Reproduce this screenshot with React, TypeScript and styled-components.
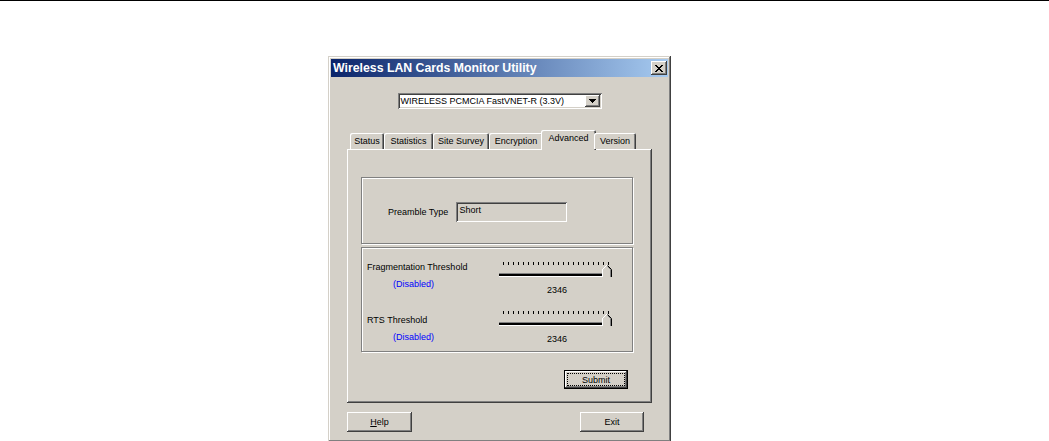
import React from "react";
import styled, { createGlobalStyle } from "styled-components";

const GlobalStyle = createGlobalStyle`
  html, body {
    margin: 0;
    padding: 0;
    background: #fff;
  }
  body {
    font-family: "Liberation Sans", Arial, sans-serif;
    font-size: 9px;
    color: #000;
  }
`;

const face = "#d4d0c8";
const raised = `inset -1px -1px #404040, inset 1px 1px #fff, inset -2px -2px #808080, inset 2px 2px ${face}`;
const sunken = `inset 1px 1px #808080, inset -1px -1px #fff, inset 2px 2px #404040, inset -2px -2px ${face}`;

const Page = styled.div`
    width: 1049px;
    height: 441px;
    overflow: hidden;
    border-top: 1px solid #000;
    box-sizing: border-box;
`;

const Window = styled.div`
    margin: 55px 0 0 328px;
    width: 343px;
    height: 386px;
    box-sizing: border-box;
    padding: 3px;
    background: ${face};
    box-shadow: inset -1px -1px #404040, inset 1px 1px ${face}, inset -2px -2px #808080, inset 2px 2px #fff;
    display: flex;
    flex-direction: column;
`;

const TitleBar = styled.div`
    height: 18px;
    display: flex;
    align-items: center;
    justify-content: space-between;
    padding: 0 1px 0 2px;
    background: linear-gradient(to right, #0a246a, #a6caf0);
`;

const Title = styled.span`
    color: #fff;
    font-weight: bold;
    font-size: 12.3px;
    line-height: 18px;
    white-space: nowrap;
`;

const CloseButton = styled.div`
    width: 16px;
    height: 14px;
    background: ${face};
    box-shadow: ${raised};
    display: flex;
    align-items: center;
    justify-content: center;
`;

const Client = styled.div`
    display: flex;
    flex-direction: column;
    padding-top: 16px;
`;

const ComboRow = styled.div`
    display: flex;
    justify-content: center;
`;

const Combo = styled.div`
    width: 204px;
    height: 16px;
    box-sizing: border-box;
    background: #fff;
    box-shadow: ${sunken};
    display: flex;
    align-items: center;
    justify-content: space-between;
    padding: 0 2px 0 3px;
    white-space: nowrap;
`;

const DropButton = styled.div`
    width: 15px;
    height: 12px;
    background: ${face};
    box-shadow: ${raised};
    display: flex;
    align-items: center;
    justify-content: center;
`;

const TabStrip = styled.div`
    margin: 22px 0 0 16px;
    padding-left: 3px;
    height: 18px;
    display: flex;
    align-items: flex-end;
    position: relative;
    z-index: 1;
`;

const Tab = styled.div<{ $w: number; $active?: boolean }>`
    width: ${(p) => p.$w + (p.$active ? 4 : 0)}px;
    height: ${(p) => (p.$active ? 20 : 16)}px;
    margin: 0 ${(p) => (p.$active ? -2 : 0)}px ${(p) => (p.$active ? -1 : 0)}px;
    box-sizing: border-box;
    background: ${face};
    border-radius: 2px 2px 0 0;
    box-shadow: inset 1px 1px #fff, inset -1px 0 #404040, inset -2px 0 #808080;
    display: flex;
    justify-content: center;
    padding-top: ${(p) => (p.$active ? 3 : 3)}px;
    line-height: 11px;
    white-space: nowrap;
`;

const Panel = styled.div`
    margin-left: 16px;
    width: 305px;
    height: 254px;
    box-sizing: border-box;
    box-shadow: ${raised};
    padding: 28px 0 0 14px;
    display: flex;
    flex-direction: column;
`;

const Group = styled.div<{ $h: number }>`
    width: 272px;
    height: ${(p) => p.$h}px;
    box-sizing: border-box;
    border: 1px solid #808080;
    box-shadow: inset 1px 1px #fff, 1px 1px #fff;
`;

const PreambleGroup = styled(Group)`
    display: flex;
    align-items: center;
    padding: 3px 0 0 26px;
`;

const Label = styled.span`
    margin-right: 8px;
    line-height: 12px;
    white-space: nowrap;
`;

const Field = styled.div`
    width: 111px;
    height: 20px;
    box-sizing: border-box;
    box-shadow: ${sunken};
    padding: 3px 0 0 3px;
    line-height: 11px;
`;

const ThresholdGroup = styled(Group)`
    margin-top: 3px;
    padding: 13px 0 0 5px;
    display: flex;
    flex-direction: column;
    gap: 14px;
`;

const Row = styled.div`
    display: grid;
    grid-template-columns: 132px 116px;
`;

const RowText = styled.div<{ $drop: number }>`
    display: flex;
    flex-direction: column;
    padding-top: ${(p) => p.$drop}px;
    line-height: 12px;
`;

const Disabled = styled.span`
    color: #0000ff;
    margin: 5px 0 0 26px;
`;

const SliderBox = styled.div`
    display: flex;
    flex-direction: column;
    align-items: center;
    line-height: 12px;
    & svg {
        display: block;
    }
`;

const Value = styled.span`
    margin-top: 6px;
`;

const SubmitRow = styled.div`
    width: 273px;
    margin-top: 18px;
    padding-right: 6px;
    box-sizing: border-box;
    display: flex;
    justify-content: flex-end;
`;

const Button = styled.div<{ $w: number; $h: number }>`
    width: ${(p) => p.$w}px;
    height: ${(p) => p.$h}px;
    box-sizing: border-box;
    background: ${face};
    box-shadow: ${raised};
    display: flex;
    align-items: center;
    justify-content: center;
    line-height: 12px;
`;

const DefaultButton = styled(Button)`
    border: 1px solid #000;
    box-shadow: inset -1px -1px #404040, inset 1px 1px #fff, inset -2px -2px #808080;
    padding: 2px;
`;

const Focus = styled.div`
    flex: 1;
    align-self: stretch;
    border: 1px dotted #000;
    display: flex;
    align-items: center;
    justify-content: center;
`;

const ButtonRow = styled.div`
    margin-top: 9px;
    padding: 0 24px 0 16px;
    display: flex;
    justify-content: space-between;
`;

const Slider: React.FC = () => (
    <svg width="116" height="17" viewBox="0 0 116 17" shapeRendering="crispEdges">
        {Array.from({ length: 22 }, (_, i) => (
            <rect key={i} x={4 + i * 5} y={1} width={1} height={i === 21 ? 6 : 3} fill="#000" />
        ))}
        <rect x="0" y="12" width="104" height="1" fill="#808080" />
        <rect x="0" y="13" width="104" height="2" fill="#000" />
        <rect x="0" y="15" width="104" height="1" fill="#fff" />
        <polygon points="103,16 103,8 107,4 109,4 113,8 113,16" fill={face} />
        <polyline points="103.5,16 103.5,8.5 107.5,4.5 108.5,4.5" fill="none" stroke="#fff" />
        <polyline points="108.5,4.5 112.5,8.5 112.5,16" fill="none" stroke="#000" shapeRendering="auto" />
        <polyline points="108.5,5.5 111.5,8.5 111.5,16" fill="none" stroke="#808080" shapeRendering="auto" />
    </svg>
);

const tabs: { name: string; w: number }[] = [
    { name: "Status", w: 34 },
    { name: "Statistics", w: 49 },
    { name: "Site Survey", w: 56 },
    { name: "Encryption", w: 54 },
    { name: "Advanced", w: 51 },
    { name: "Version", w: 42 },
];

const Threshold: React.FC<{ label: string; drop: number }> = ({ label, drop }) => (
    <Row>
        <RowText $drop={drop}>
            <span>{label}</span>
            <Disabled>(Disabled)</Disabled>
        </RowText>
        <SliderBox>
            <Slider />
            <Value>2346</Value>
        </SliderBox>
    </Row>
);

const App: React.FC = () => {
    return (
        <Page>
            <GlobalStyle />
            <Window>
                <TitleBar>
                    <Title>Wireless LAN Cards Monitor Utility</Title>
                    <CloseButton>
                        <svg width="8" height="7" viewBox="0 0 8 7" shapeRendering="crispEdges">
                            <path d="M0 0h2v1h1v1h2v-1h1v-1h2v1h-1v1h-1v1h-1v1h1v1h1v1h1v1h-2v-1h-1v-1h-2v1h-1v1h-2v-1h1v-1h1v-1h1v-1h-1v-1h-1v-1h-1z" fill="#000" />
                        </svg>
                    </CloseButton>
                </TitleBar>
                <Client>
                    <ComboRow>
                        <Combo>
                            <span>WIRELESS PCMCIA FastVNET-R (3.3V)</span>
                            <DropButton>
                                <svg width="7" height="4" viewBox="0 0 7 4" shapeRendering="crispEdges">
                                    <path d="M0 0h7v1h-1v1h-1v1h-1v1h-1v-1h-1v-1h-1v-1h-1z" fill="#000" />
                                </svg>
                            </DropButton>
                        </Combo>
                    </ComboRow>
                    <TabStrip>
                        {tabs.map((t) => (
                            <Tab key={t.name} $w={t.w} $active={t.name === "Advanced"}>
                                {t.name}
                            </Tab>
                        ))}
                    </TabStrip>
                    <Panel>
                        <PreambleGroup $h={67}>
                            <Label>Preamble Type</Label>
                            <Field>Short</Field>
                        </PreambleGroup>
                        <ThresholdGroup $h={105}>
                            <Threshold label="Fragmentation Threshold" drop={0} />
                            <Threshold label="RTS Threshold" drop={4} />
                        </ThresholdGroup>
                        <SubmitRow>
                            <DefaultButton $w={64} $h={19}>
                                <Focus>Submit</Focus>
                            </DefaultButton>
                        </SubmitRow>
                    </Panel>
                    <ButtonRow>
                        <Button $w={65} $h={20}>
                            <span>
                                <u>H</u>elp
                            </span>
                        </Button>
                        <Button $w={64} $h={20}>
                            Exit
                        </Button>
                    </ButtonRow>
                </Client>
            </Window>
        </Page>
    );
};

export default App;
